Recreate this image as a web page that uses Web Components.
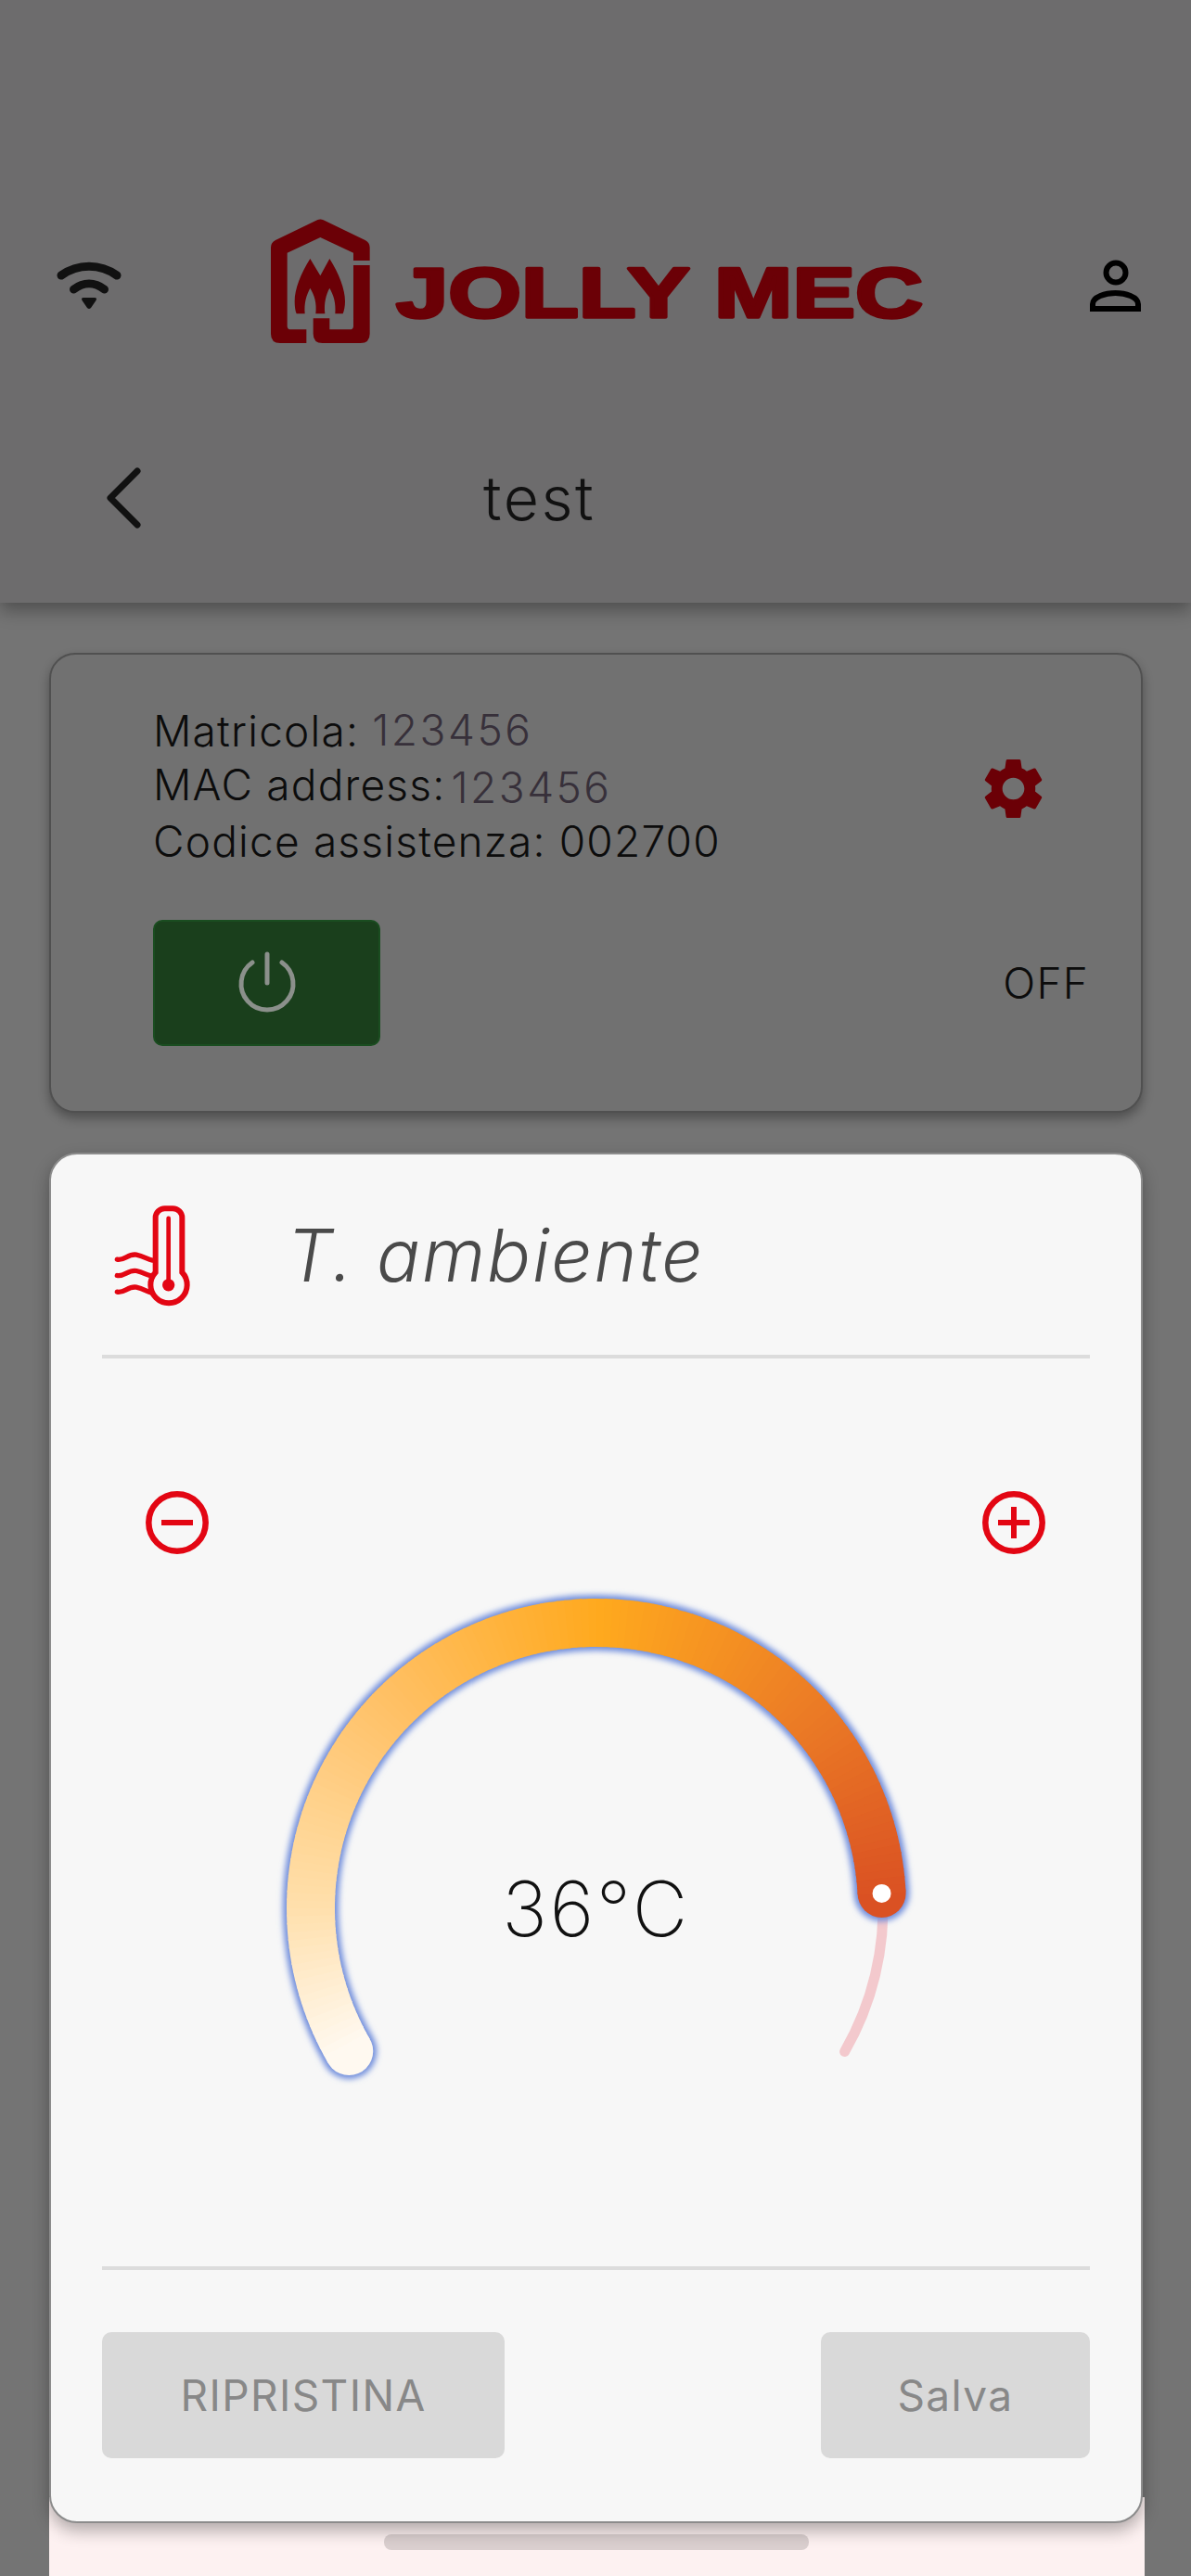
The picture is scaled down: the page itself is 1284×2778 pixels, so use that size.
<!DOCTYPE html>
<html lang="it">
<head>
<meta charset="utf-8">
<title>Jolly Mec</title>
<style>
    html, body { margin: 0; padding: 0; }
    body {
        width: 1284px;
        height: 2778px;
        overflow: hidden;
        background: #747474;
        font-family: "Inter", "Liberation Sans", sans-serif;
        display: flex;
        flex-direction: column;
    }
</style>
</head>
<body>
    <jm-header>test</jm-header>
    <jm-device-card serial="123456" mac="123456" code="002700" state="OFF"></jm-device-card>
    <jm-backdrop>
        <jm-sheet heading="T. ambiente">
            <jm-gauge value="36°C" angle="357"></jm-gauge>
        </jm-sheet>
    </jm-backdrop>

<script>
class JmHeader extends HTMLElement {
    constructor() {
        super();
        this.attachShadow({ mode: 'open' });
        this.render();
    }

    render() {
        this.shadowRoot.innerHTML = `
        <style>
            :host {
                display: block;
                box-sizing: border-box;
                height: 650px;
                padding-top: 236px;
                background: #6d6c6d;
                box-shadow: 0 8px 18px rgba(0, 0, 0, 0.32);
                flex: none;
            }
            .top {
                display: flex;
                align-items: center;
                height: 134px;
                padding: 0 51px 0 60px;
            }
            .logo { margin-left: 160px; display: block; }
            .user { margin-left: auto; display: block; margin-top: 12px; }
            .wifi { display: block; margin-top: 12px; }
            .nav {
                display: flex;
                align-items: center;
                height: 64px;
                margin-top: 135px;
                padding-left: 113px;
            }
            .title {
                margin-left: 364px;
                font-size: 66px;
                font-weight: 300;
                color: #111;
                letter-spacing: 2.5px;
            }
        </style>
        <div class="top">
            <svg class="wifi" width="72" height="54" viewBox="60 282 72 54">
                <path d="M66 297 C84 284 108 284 126 297" fill="none" stroke="#111" stroke-width="9" stroke-linecap="round"/>
                <path d="M79.500 312 C90 304 102 304 112.500 312" fill="none" stroke="#111" stroke-width="9" stroke-linecap="round"/>
                <path d="M90 321 H102 Q105 321 103.500 324 L98 332 Q96 334 94 332 L88.500 324 Q87 321 90 321Z" fill="#111"/>
            </svg>
            <svg class="logo" width="704" height="134" viewBox="0 0 704 134">
                <g fill="#6b0006" transform="scale(0.3333) translate(-95 -78)">
                    <path d="M415 213 V170 Q415 155 400 147 L265 82 Q255 77 245 82 L110 147 Q95 155 95 170 V450 Q95 480 125 480 H210 V436 H160 Q148 436 148 425 V188 L255 138 L362 188 V213Z"/>
                    <path d="M362 228 H415 V450 Q415 480 385 480 H262 Q232 480 232 450 V400 H285 V436 H350 Q362 436 362 425Z"/>
                    <path d="M222 207 L255 262 L285 207 C315 255 335 305 335 345 C335 362 332 375 328 385 H303 C306 350 298 325 285 302 C274 322 266 350 270 385 H240 C244 350 236 325 222 302 C210 325 202 350 205 385 H178 C174 375 172 362 172 345 C172 305 192 255 222 207Z"/>
                </g>
                <text x="135" y="105.500" font-family="Liberation Sans, sans-serif" font-weight="700" font-size="76" fill="#6b0006" stroke="#6b0006" stroke-width="3.500" stroke-linejoin="round" textLength="568" lengthAdjust="spacingAndGlyphs">JOLLY MEC</text>
            </svg>
            <svg class="user" width="60" height="60" viewBox="1172 278 60 60">
                <circle cx="1202" cy="293" r="10.500" fill="none" stroke="#000" stroke-width="6"/>
                <path d="M1177 332 V327 C1177 319 1191 315 1201.500 315 C1212 315 1226 319 1226 327 V332Z" fill="none" stroke="#000" stroke-width="6"/>
            </svg>
        </div>
        <div class="nav">
            <svg width="44" height="68" viewBox="116 503 44 68">
                <path d="M151 508 L122 537 L151 566" fill="none" stroke="#111" stroke-width="7" stroke-linecap="round" stroke-linejoin="round"/>
            </svg>
            <span class="title"><slot></slot></span>
        </div>
        `;
    }
}

class JmDeviceCard extends HTMLElement {
    constructor() {
        super();
        this.attachShadow({ mode: 'open' });
        this.render();
    }

    render() {
        const serial = this.getAttribute('serial');
        const mac = this.getAttribute('mac');
        const code = this.getAttribute('code');
        const state = this.getAttribute('state');
        this.shadowRoot.innerHTML = `
        <style>
            :host {
                display: block;
                box-sizing: border-box;
                flex: none;
                width: 1179px;
                height: 496px;
                margin: 54px 0 0 53px;
                padding: 52px 56px 0 110px;
                background: #717171;
                border: 2px solid #505050;
                border-radius: 28px;
                box-shadow: 0 6px 12px rgba(0, 0, 0, 0.32);
                color: #0c0c0c;
                font-size: 46px;
                font-weight: 300;
                letter-spacing: 1.2px;
            }
            .row {
                display: flex;
                align-items: center;
                justify-content: space-between;
            }
            .info { line-height: 58px; }
            .num { color: #37303a; letter-spacing: 2.5px; vertical-align: 1px; }
            .num.low { vertical-align: -3px; margin-left: 6px; }
            .gear { display: block; margin: 6px 42px 0 0; }
            .second { margin-top: 56px; }
            .power {
                display: flex;
                align-items: center;
                justify-content: center;
                box-sizing: border-box;
                width: 245px;
                height: 136px;
                background: #1a3f1c;
                border: 2px solid #1a4d20;
                border-radius: 10px;
            }
        </style>
        <div class="row">
            <div class="info">
                <div>Matricola: <span class="num">${serial}</span></div>
                <div>MAC address:<span class="num low">${mac}</span></div>
                <div>Codice assistenza: ${code}</div>
            </div>
            <svg class="gear" width="79" height="79" viewBox="0 0 24 24">
                <path fill="#6b0006" d="M19.14 12.94c.04-.3.06-.61.06-.94 0-.32-.02-.64-.07-.94l2.03-1.58c.18-.14.23-.41.12-.61l-1.92-3.32c-.12-.22-.37-.29-.59-.22l-2.39.96c-.5-.38-1.03-.7-1.62-.94l-.36-2.54c-.04-.24-.24-.41-.48-.41h-3.84c-.24 0-.43.17-.47.41l-.36 2.54c-.59.24-1.13.57-1.62.94l-2.39-.96c-.22-.08-.47 0-.59.22L2.74 8.87c-.12.21-.08.47.12.61l2.03 1.58c-.05.3-.09.63-.09.94s.02.64.07.94l-2.03 1.58c-.18.14-.23.41-.12.61l1.92 3.32c.12.22.37.29.59.22l2.39-.96c.5.38 1.03.7 1.62.94l.36 2.54c.05.24.24.41.48.41h3.84c.24 0 .44-.17.47-.41l.36-2.54c.59-.24 1.13-.56 1.62-.94l2.39.96c.22.08.47 0 .59-.22l1.92-3.32c.12-.22.07-.47-.12-.61l-2.01-1.58zM12 15.6c-1.98 0-3.6-1.62-3.6-3.6s1.62-3.6 3.6-3.6 3.6 1.62 3.6 3.6-1.62 3.6-3.6 3.6z"/>
            </svg>
        </div>
        <div class="row second">
            <div class="power">
                <svg width="70" height="70" viewBox="0 0 70 70">
                    <path d="M19 13 A28 28 0 1 0 51 13" fill="none" stroke="#8b908b" stroke-width="5" stroke-linecap="round"/>
                    <path d="M35 4 V35" fill="none" stroke="#8b908b" stroke-width="5" stroke-linecap="round"/>
                </svg>
            </div>
            <span>${state}</span>
        </div>
        `;
    }
}

class JmBackdrop extends HTMLElement {
    constructor() {
        super();
        this.attachShadow({ mode: 'open' });
        this.shadowRoot.innerHTML = `
        <style>
            :host {
                display: block;
                flex: 1;
                width: 1181px;
                margin: 43px 0 0 53px;
                background: linear-gradient(transparent 1450px, #fdf1f1 1450px);
            }
            .home {
                width: 458px;
                height: 17px;
                margin: 12px 0 0 361px;
                background: #dacfcf;
                border-radius: 8px;
            }
            ::slotted(jm-sheet) { position: relative; z-index: 1; }
        </style>
        <slot></slot>
        <div class="home"></div>
        `;
    }
}

class JmSheet extends HTMLElement {
    constructor() {
        super();
        this.attachShadow({ mode: 'open' });
        this.render();
    }

    render() {
        const heading = this.getAttribute('heading');
        this.shadowRoot.innerHTML = `
        <style>
            :host {
                display: flex;
                flex-direction: column;
                box-sizing: border-box;
                width: 1179px;
                height: 1478px;
                padding: 0 55px;
                background: #f7f7f7;
                border: 2px solid #8c8c8c;
                border-radius: 30px;
                box-shadow: 0 8px 18px rgba(0, 0, 0, 0.3);
            }
            .head {
                display: flex;
                align-items: center;
                flex: none;
                height: 216px;
                padding-left: 12px;
            }
            .head svg { display: block; margin-top: 2px; }
            .head h2 {
                margin: 0 0 0 102px;
                font-size: 78px;
                font-weight: 300;
                font-style: italic;
                letter-spacing: 2px;
                color: #4a4a4a;
            }
            hr {
                flex: none;
                width: 100%;
                height: 4px;
                margin: 0;
                border: 0;
                background: #dcdcdc;
            }
            .steps {
                display: flex;
                justify-content: space-between;
                flex: none;
                margin-top: 143px;
                padding: 0 48px 0 47px;
            }
            .steps svg { display: block; }
            .slot { flex: none; margin-top: 24px; height: 744px; }
            .actions {
                display: flex;
                justify-content: space-between;
                flex: none;
                margin-top: 67px;
            }
            button {
                box-sizing: border-box;
                height: 136px;
                padding: 0;
                border: 0;
                border-radius: 10px;
                background: #d9d9d9;
                color: #888;
                font: 400 46px "Inter", "Liberation Sans", sans-serif;
                letter-spacing: 1.4px;
            }
            .reset { width: 434px; }
            .save { width: 290px; }
        </style>
        <div class="head">
            <svg width="85" height="112" viewBox="95 85 255 335">
                <path d="M232 307 V130 a30 30 0 0 1 30 -30 h26 a30 30 0 0 1 30 30 V307 A59 59 0 1 1 232 307Z" fill="none" stroke="#e30613" stroke-width="18"/>
                <path d="M274 132 V340" stroke="#e30613" stroke-width="14" stroke-linecap="round"/>
                <circle cx="274" cy="348" r="20" fill="#e30613"/>
                <g fill="none" stroke="#e30613" stroke-width="16" stroke-linecap="round">
                    <path d="M108 265 C130 270 145 245 170 250 S205 265 222 268"/>
                    <path d="M108 317 C130 322 145 297 170 302 S200 315 218 318"/>
                    <path d="M108 370 C130 375 145 350 170 355 S200 368 222 374"/>
                </g>
            </svg>
            <h2>${heading}</h2>
        </div>
        <hr>
        <div class="steps">
            <svg width="68" height="68" viewBox="0 0 68 68">
                <circle cx="34" cy="34" r="30.700" fill="none" stroke="#e30613" stroke-width="6.500"/>
                <path d="M17 34 H51" stroke="#e30613" stroke-width="6"/>
            </svg>
            <svg width="68" height="68" viewBox="0 0 68 68">
                <circle cx="34" cy="34" r="30.700" fill="none" stroke="#e30613" stroke-width="6.500"/>
                <path d="M17 34 H51 M34 17 V51" stroke="#e30613" stroke-width="6"/>
            </svg>
        </div>
        <div class="slot"><slot></slot></div>
        <hr>
        <div class="actions">
            <button class="reset">RIPRISTINA</button>
            <button class="save">Salva</button>
        </div>
        `;
    }
}

class JmGauge extends HTMLElement {
    constructor() {
        super();
        this.attachShadow({ mode: 'open' });
        this.render();
    }

    point(angle, radius) {
        const rad = angle * Math.PI / 180;
        return [360 + radius * Math.cos(rad), 358 + radius * Math.sin(rad)];
    }

    arc(from, to, radius) {
        const a = this.point(from, radius);
        const b = this.point(to, radius);
        const large = to - from > 180 ? 1 : 0;
        return `M${a[0].toFixed(2)} ${a[1].toFixed(2)} A${radius} ${radius} 0 ${large} 1 ${b[0].toFixed(2)} ${b[1].toFixed(2)}`;
    }

    color(angle) {
        const stops = [
            [150, [255, 249, 240]],
            [180, [255, 223, 171]],
            [225, [255, 192, 100]],
            [270, [255, 169, 30]],
            [315, [236, 125, 37]],
            [357, [218, 81, 35]]
        ];
        let i = 0;
        while (i < stops.length - 2 && angle > stops[i + 1][0]) i++;
        const t = (angle - stops[i][0]) / (stops[i + 1][0] - stops[i][0]);
        const c = stops[i][1].map((v, k) => Math.round(v + (stops[i + 1][1][k] - v) * t));
        return `rgb(${c.join(',')})`;
    }

    render() {
        const end = Number(this.getAttribute('angle'));
        const start = 150;
        const R = 308;
        let segments = '';
        for (let a = start; a < end; a += 1.5) {
            const to = Math.min(a + 1.8, end);
            segments += `<path d="${this.arc(a, to, R)}" stroke="${this.color(a)}"/>`;
        }
        const s = this.point(start, R);
        const e = this.point(end, R);
        this.shadowRoot.innerHTML = `
        <style>
            :host {
                display: block;
                position: relative;
                width: 720px;
                height: 580px;
                margin: 0 auto;
            }
            svg { display: block; }
            .value {
                position: absolute;
                left: 0;
                right: 0;
                top: 358px;
                transform: translateY(-50%);
                text-align: center;
                font: 200 82px "Inter", "Liberation Sans", sans-serif;
                letter-spacing: 2.5px;
                color: #111;
            }
        </style>
        <svg width="720" height="580" viewBox="0 0 720 580">
            <defs><filter id="glow" x="-10%" y="-10%" width="120%" height="120%"><feGaussianBlur stdDeviation="3"/></filter></defs>
            <path d="${this.arc(end, 390, 309)}" fill="none" stroke="#f3c9cd" stroke-width="11" stroke-linecap="round"/>
            <path d="${this.arc(start, end, R)}" fill="none" stroke="#6f8ddc" stroke-width="60" stroke-linecap="round" filter="url(#glow)"/>
            <circle cx="${s[0]}" cy="${s[1]}" r="26" fill="${this.color(start)}"/>
            <circle cx="${e[0]}" cy="${e[1]}" r="26" fill="${this.color(end)}"/>
            <g fill="none" stroke-width="52">${segments}</g>
            <circle cx="${e[0]}" cy="${e[1]}" r="10" fill="#fff"/>
        </svg>
        <span class="value">${this.getAttribute('value')}</span>
        `;
    }
}

customElements.define('jm-header', JmHeader);
customElements.define('jm-device-card', JmDeviceCard);
customElements.define('jm-backdrop', JmBackdrop);
customElements.define('jm-sheet', JmSheet);
customElements.define('jm-gauge', JmGauge);
</script>
</body>
</html>
